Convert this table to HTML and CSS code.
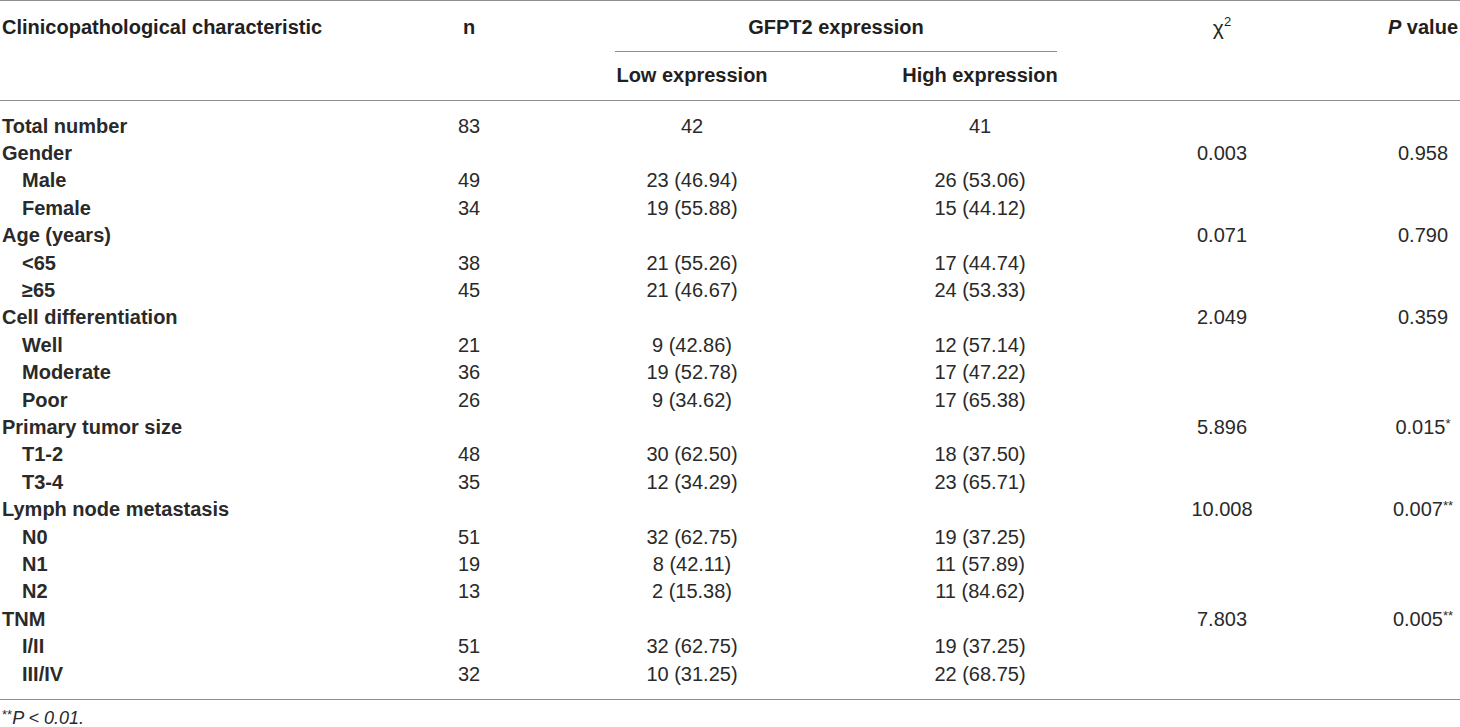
FILE: index.html
```html
<!DOCTYPE html>
<html lang="en">
<head>
<meta charset="utf-8">
<title>GFPT2 expression table</title>
<link rel="stylesheet" href="styles.css">
</head>
<body>
<table class="tbl">
  <colgroup>
    <col class="c-label">
    <col class="c-n">
    <col class="c-low">
    <col class="c-high">
    <col class="c-chi">
    <col class="c-p">
  </colgroup>
  <thead>
    <tr class="h1">
      <th rowspan="2" class="label">Clinicopathological characteristic</th>
      <th rowspan="2" class="n">n</th>
      <th colspan="2" class="group"><div class="group-inner">GFPT2 expression</div></th>
      <th rowspan="2" class="chi">χ<sup>2</sup></th>
      <th rowspan="2" class="p"><i>P</i> value</th>
    </tr>
    <tr class="h2">
      <th class="low">Low expression</th>
      <th class="high">High expression</th>
    </tr>
  </thead>
  <tbody>
    <tr><td class="label">Total number</td><td class="n">83</td><td class="low">42</td><td class="high">41</td><td class="chi"></td><td class="p"></td></tr>
    <tr><td class="label">Gender</td><td class="n"></td><td class="low"></td><td class="high"></td><td class="chi">0.003</td><td class="p">0.958</td></tr>
    <tr><td class="label sub">Male</td><td class="n">49</td><td class="low">23 (46.94)</td><td class="high">26 (53.06)</td><td class="chi"></td><td class="p"></td></tr>
    <tr><td class="label sub">Female</td><td class="n">34</td><td class="low">19 (55.88)</td><td class="high">15 (44.12)</td><td class="chi"></td><td class="p"></td></tr>
    <tr><td class="label">Age (years)</td><td class="n"></td><td class="low"></td><td class="high"></td><td class="chi">0.071</td><td class="p">0.790</td></tr>
    <tr><td class="label sub">&lt;65</td><td class="n">38</td><td class="low">21 (55.26)</td><td class="high">17 (44.74)</td><td class="chi"></td><td class="p"></td></tr>
    <tr><td class="label sub">≥65</td><td class="n">45</td><td class="low">21 (46.67)</td><td class="high">24 (53.33)</td><td class="chi"></td><td class="p"></td></tr>
    <tr><td class="label">Cell differentiation</td><td class="n"></td><td class="low"></td><td class="high"></td><td class="chi">2.049</td><td class="p">0.359</td></tr>
    <tr><td class="label sub">Well</td><td class="n">21</td><td class="low">9 (42.86)</td><td class="high">12 (57.14)</td><td class="chi"></td><td class="p"></td></tr>
    <tr><td class="label sub">Moderate</td><td class="n">36</td><td class="low">19 (52.78)</td><td class="high">17 (47.22)</td><td class="chi"></td><td class="p"></td></tr>
    <tr><td class="label sub">Poor</td><td class="n">26</td><td class="low">9 (34.62)</td><td class="high">17 (65.38)</td><td class="chi"></td><td class="p"></td></tr>
    <tr><td class="label">Primary tumor size</td><td class="n"></td><td class="low"></td><td class="high"></td><td class="chi">5.896</td><td class="p">0.015<sup class="ast">*</sup></td></tr>
    <tr><td class="label sub">T1-2</td><td class="n">48</td><td class="low">30 (62.50)</td><td class="high">18 (37.50)</td><td class="chi"></td><td class="p"></td></tr>
    <tr><td class="label sub">T3-4</td><td class="n">35</td><td class="low">12 (34.29)</td><td class="high">23 (65.71)</td><td class="chi"></td><td class="p"></td></tr>
    <tr><td class="label">Lymph node metastasis</td><td class="n"></td><td class="low"></td><td class="high"></td><td class="chi">10.008</td><td class="p">0.007<sup class="ast">**</sup></td></tr>
    <tr><td class="label sub">N0</td><td class="n">51</td><td class="low">32 (62.75)</td><td class="high">19 (37.25)</td><td class="chi"></td><td class="p"></td></tr>
    <tr><td class="label sub">N1</td><td class="n">19</td><td class="low">8 (42.11)</td><td class="high">11 (57.89)</td><td class="chi"></td><td class="p"></td></tr>
    <tr><td class="label sub">N2</td><td class="n">13</td><td class="low">2 (15.38)</td><td class="high">11 (84.62)</td><td class="chi"></td><td class="p"></td></tr>
    <tr><td class="label">TNM</td><td class="n"></td><td class="low"></td><td class="high"></td><td class="chi">7.803</td><td class="p">0.005<sup class="ast">**</sup></td></tr>
    <tr><td class="label sub">I/II</td><td class="n">51</td><td class="low">32 (62.75)</td><td class="high">19 (37.25)</td><td class="chi"></td><td class="p"></td></tr>
    <tr><td class="label sub">III/IV</td><td class="n">32</td><td class="low">10 (31.25)</td><td class="high">22 (68.75)</td><td class="chi"></td><td class="p"></td></tr>
  </tbody>
</table>
<p class="foot"><sup class="ast">**</sup><i>P</i> &lt; 0.01.</p>
</body>
</html>
```

FILE: styles.css
```css
html, body {
  margin: 0;
  padding: 0;
  background: #ffffff;
}

body {
  font-family: "Liberation Sans", Arial, Helvetica, sans-serif;
  color: #231f20;
  font-size: 20px;
}

.tbl {
  width: 1460px;
  border-collapse: collapse;
  table-layout: fixed;
  border-top: 1px solid #8f8f8f;
}

.c-label { width: 420px; }
.c-n { width: 98px; }
.c-low { width: 348px; }
.c-high { width: 228px; }
.c-chi { width: 256px; }
.c-p { width: 110px; }

th, td {
  padding: 0;
  line-height: 27.4px;
  white-space: nowrap;
}

thead th {
  font-weight: bold;
  vertical-align: top;
  text-align: center;
}

thead {
  border-bottom: 1px solid #8f8f8f;
}

.h1 th {
  padding-top: 13px;
  height: 37px;
}

.h1 th.group {
  padding-top: 0;
}

.group-inner {
  margin: 0 37px 0 97px;
  padding-top: 13px;
  padding-bottom: 9.6px;
  border-bottom: 1px solid #8f8f8f;
}

.h2 th {
  padding-top: 10.3px;
  padding-bottom: 10.3px;
}

th.label, td.label {
  text-align: left;
  padding-left: 2px;
  font-weight: bold;
}

td.label.sub {
  padding-left: 22px;
}

th.chi {
  font-weight: normal;
  font-size: 21px;
}

th.chi sup {
  font-size: 13px;
  vertical-align: 9px;
  line-height: 0;
}

th.p {
  padding-left: 36px;
}

td {
  color: #2a2a2a;
  text-align: center;
}

td.p {
  padding-left: 36px;
}

tbody tr:first-child td {
  padding-top: 11.5px;
}

tbody tr:last-child td {
  padding-bottom: 11.3px;
}

tbody {
  border-bottom: 1px solid #8f8f8f;
}

.ast {
  font-size: 13px;
  vertical-align: 6px;
  line-height: 0;
}

.foot {
  margin: 6px 0 0 2px;
  font-size: 18px;
  font-style: italic;
  color: #2a2a2a;
  line-height: 24px;
}

.foot .ast {
  font-style: normal;
  font-size: 13px;
  vertical-align: 5px;
}
```
